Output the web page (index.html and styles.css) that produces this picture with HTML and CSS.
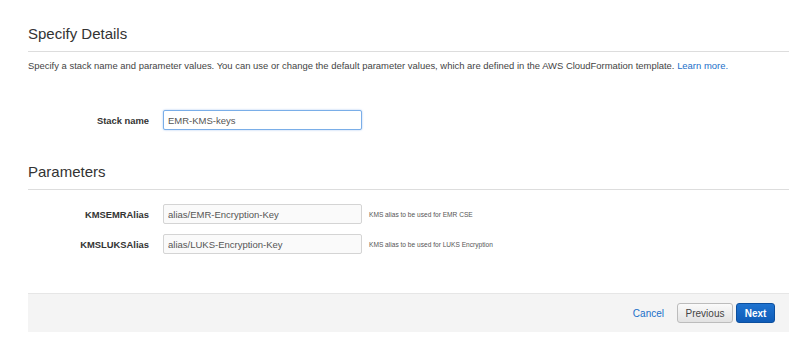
FILE: index.html
```html
<!DOCTYPE html>
<html lang="en">
<head>
    <meta charset="UTF-8">
    <title>Specify Details</title>
    <link rel="stylesheet" href="styles.css">
</head>
<body>
    <div class="page">
        <!-- Details -->
        <h2 class="section-title">Specify Details</h2>
        <p class="intro">Specify a stack name and parameter values. You can use or change the default parameter values, which are defined in the AWS CloudFormation template. <a href="#">Learn more.</a></p>

        <div class="field stack-field">
            <label class="field-label" for="stackName">Stack name</label>
            <input type="text" id="stackName" class="field-input focused" value="EMR-KMS-keys">
        </div>

        <!-- Parameters -->
        <h2 class="section-title params-title">Parameters</h2>

        <div class="field first-param">
            <label class="field-label" for="kmsEmr">KMSEMRAlias</label>
            <input type="text" id="kmsEmr" class="field-input" value="alias/EMR-Encryption-Key">
            <span class="field-help">KMS alias to be used for EMR CSE</span>
        </div>
        <div class="field">
            <label class="field-label" for="kmsLuks">KMSLUKSAlias</label>
            <input type="text" id="kmsLuks" class="field-input" value="alias/LUKS-Encryption-Key">
            <span class="field-help">KMS alias to be used for LUKS Encryption</span>
        </div>

        <!-- Footer -->
        <div class="footer">
            <a href="#" class="cancel">Cancel</a>
            <button class="btn btn-prev">Previous</button>
            <button class="btn btn-next">Next</button>
        </div>
    </div>
</body>
</html>
```

FILE: styles.css
```css
body { margin: 0; background: #fff; font-family: "Liberation Sans", Arial, sans-serif; color: #444; }
.page { padding: 24px 11px 0 28px; }

.section-title { margin: 0; font-size: 15px; line-height: 20px; font-weight: normal; color: #333; padding-bottom: 7px; border-bottom: 1px solid #ddd; }
.params-title { margin-top: 32px; }

.intro { margin: 7px 0 0; font-size: 9.45px; line-height: 14px; color: #444; }
.intro a { color: #1a6fc9; text-decoration: none; }

/* Form rows */
.field { display: flex; align-items: center; margin-top: 10px; }
.stack-field { margin-top: 37px; }
.first-param { margin-top: 14px; }
.field-label { width: 121px; text-align: right; font-size: 9.4px; font-weight: bold; color: #333; margin-right: 14px; }
.field-input { box-sizing: border-box; width: 199px; height: 20px; padding: 0 4px; margin: 0; font-family: inherit; font-size: 9.5px; color: #555; background: #fafafa; border: 1px solid #d4d4d4; border-radius: 2px; outline: none; }
.field-input.focused { background: #fff; border-color: #7aaee8; box-shadow: 0 0 2px rgba(90, 150, 230, 0.6); }
.field-help { margin-left: 7px; font-size: 6.6px; color: #555; }

/* Footer */
.footer { display: flex; align-items: center; justify-content: flex-end; margin-top: 39px; height: 38px; background: #f4f4f4; border-top: 1px solid #e6e6e6; padding-right: 14px; }
.cancel { font-size: 10px; color: #1a6fc9; text-decoration: none; margin-right: 13px; }
.btn { box-sizing: border-box; height: 20px; font-family: inherit; font-size: 10px; border-radius: 3px; padding: 0; cursor: pointer; }
.btn-prev { width: 56px; color: #444; background: linear-gradient(#fafafa, #e2e2e2); border: 1px solid #bcbcbc; margin-right: 3px; }
.btn-next { width: 39px; color: #fff; font-weight: bold; background: linear-gradient(#1f73d0, #0f5cb8); border: 1px solid #0c4f9e; }
```
